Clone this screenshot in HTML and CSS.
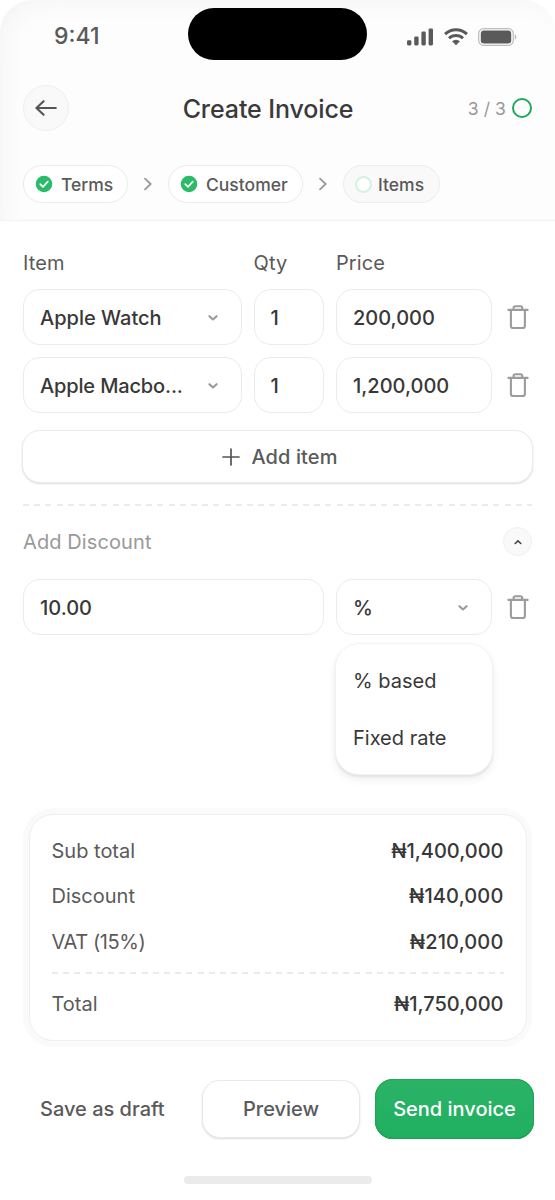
FILE: index.html
```html
<!DOCTYPE html>
<html lang="en">
<head>
<meta charset="utf-8">
<title>Create Invoice</title>
<link rel="stylesheet" href="styles.css">
</head>
<body>
<svg class="defs" width="0" height="0" aria-hidden="true">
  <symbol id="trash" viewBox="0 0 22 26"><path d="M1.4 5.9H20.6M6.6 5.4V4Q6.6 2.2 8.4 2.2H13.4Q15.2 2.2 15.2 4V5.4M3.9 6V21.7Q3.9 24 6.2 24H15.6Q17.9 24 17.9 21.7V6" fill="none" stroke="#9c9c9c" stroke-width="2.1" stroke-linecap="round"/></symbol>
  <symbol id="down" viewBox="0 0 12 8"><path d="M2.4 2.2L6 5.5L9.6 2.2" fill="none" stroke="#999" stroke-width="2.1" stroke-linecap="round" stroke-linejoin="round"/></symbol>
  <symbol id="next" viewBox="0 0 10 14"><path d="M2 1.7L7.7 7L2 12.3" fill="none" stroke="#999" stroke-width="1.8" stroke-linecap="round" stroke-linejoin="round"/></symbol>
  <symbol id="check" viewBox="0 0 18 18"><circle cx="9" cy="9" r="8.3" fill="#2abb68"/><path d="M5.2 9.2L8 11.8L12.8 6.6" fill="none" stroke="#fff" stroke-width="1.7" stroke-linecap="round" stroke-linejoin="round"/></symbol>
</svg>
<main class="screen">
  <header class="header">
    <div class="status">
      <span class="time">9:41</span>
      <div class="island"></div>
      <div class="signals">
        <svg width="27" height="19" viewBox="0 0 27 19" fill="#5a5a5a"><rect x="0" y="12.2" width="4.4" height="5.2" rx="1.3"/><rect x="7.2" y="8.6" width="4.4" height="8.8" rx="1.3"/><rect x="14.4" y="3.6" width="4.4" height="13.8" rx="1.3"/><rect x="21.6" y=".4" width="4.4" height="17" rx="1.3"/></svg>
        <svg width="24" height="18" viewBox="0 0 24 18"><g fill="none" stroke="#5a5a5a" stroke-width="3"><path d="M1.1 6.1A15.6 15.6 0 0 1 22.9 6.1"/><path d="M5 10.3A10 10 0 0 1 19 10.3"/></g><path d="M8 13.2Q12 10.2 16 13.2L12 17.2Z" fill="#5a5a5a"/></svg>
        <svg width="39" height="19" viewBox="0 0 39 19"><rect x=".7" y="0.6" width="34.6" height="16.8" rx="5" fill="none" stroke="#bbb" stroke-width="1.2"/><rect x="2.8" y="2.6" width="30.4" height="12.8" rx="3.2" fill="#5a5a5a"/><path d="M36.8 6.2Q38.4 7 38.4 9T36.8 11.8Z" fill="#bbb"/></svg>
      </div>
    </div>
    <div class="titlebar">
      <button class="back"><svg width="24" height="20" viewBox="0 0 24 20"><path d="M21.8 10H2.6M9.6 3.2L2.4 10L9.6 16.8" fill="none" stroke="#555" stroke-width="2.1" stroke-linecap="round" stroke-linejoin="round"/></svg></button>
      <h1 class="title">Create Invoice</h1>
      <div class="progress"><span>3 / 3</span><i class="ring"></i></div>
    </div>
    <nav class="steps">
      <div class="step"><svg width="18" height="18"><use href="#check"/></svg><span>Terms</span></div>
      <svg class="next" width="10" height="14"><use href="#next"/></svg>
      <div class="step step-customer"><svg width="18" height="18"><use href="#check"/></svg><span>Customer</span></div>
      <svg class="next" width="10" height="14"><use href="#next"/></svg>
      <div class="step step-current"><i class="dot"></i><span>Items</span></div>
    </nav>
  </header>

  <section class="items">
    <div class="row labels"><span>Item</span><span>Qty</span><span>Price</span></div>
    <div class="row">
      <div class="field"><span>Apple Watch</span><svg width="12" height="8"><use href="#down"/></svg></div>
      <div class="field">1</div>
      <div class="field"><span>200,000</span></div>
      <svg class="trash" width="22" height="26"><use href="#trash"/></svg>
    </div>
    <div class="row">
      <div class="field"><span class="long">Apple Macbo...</span><svg width="12" height="8"><use href="#down"/></svg></div>
      <div class="field">1</div>
      <div class="field"><span>1,200,000</span></div>
      <svg class="trash" width="22" height="26"><use href="#trash"/></svg>
    </div>
    <button class="add"><svg width="18" height="18" viewBox="0 0 18 18"><path d="M9 1V17M1 9H17" stroke="#555" stroke-width="1.7" stroke-linecap="round"/></svg><span>Add item</span></button>
  </section>
  <div class="dashed"></div>
  <section class="discount">
    <div class="discount-head"><span>Add Discount</span><button class="collapse"><svg width="8" height="6" viewBox="0 0 8 6"><path d="M1.2 4.5L4 1.8L6.8 4.5" fill="none" stroke="#444" stroke-width="1.6" stroke-linecap="round"/></svg></button></div>
    <div class="discount-row">
      <div class="field"><span>10.00</span></div>
      <div class="field select"><span>%</span><svg width="12" height="8"><use href="#down"/></svg>
        <div class="menu"><span>% based</span><span>Fixed rate</span></div>
      </div>
      <svg class="trash" width="22" height="26"><use href="#trash"/></svg>
    </div>
  </section>
  <section class="summary">
    <div class="card">
      <div class="line"><span>Sub total</span><b>₦1,400,000</b></div>
      <div class="line"><span>Discount</span><b class="wide">₦140,000</b></div>
      <div class="line"><span class="vat">VAT (15%)</span><b class="wide">₦210,000</b></div>
      <div class="dashed"></div>
      <div class="line total"><span>Total</span><b>₦1,750,000</b></div>
    </div>
  </section>
  <footer class="actions">
    <button class="draft">Save as draft</button>
    <button class="preview">Preview</button>
    <button class="send">Send invoice</button>
  </footer>
  <div class="home"></div>
</main>
</body>
</html>
```
FILE: styles.css
```css
* { box-sizing: border-box; }
body { margin: 0; background: #fff; font-family: Inter, "Liberation Sans", sans-serif; font-size: 20px; letter-spacing: 0.1px; color: #5a5a5a; }
button { font: inherit; letter-spacing: inherit; color: inherit; padding: 0; margin: 0; border: 0; background: none; }
svg { display: block; flex: none; }
.defs { position: absolute; }
.screen { width: 555px; height: 1200px; overflow: hidden; background: #fff; display: flex; flex-direction: column; }

.header { height: 221px; flex: none; border-bottom: 1.5px solid #f3f3f3; background: #fdfdfd; border-radius: 32px 32px 0 0; box-shadow: inset 12px 10px 26px -10px #f3f3f3; }
.status { height: 73px; padding: 8px 38px 0 54px; display: grid; grid-template-columns: 134px 179px 1fr; }
.time { font-size: 23px; font-weight: 500; line-height: 28px; padding-top: 14px; letter-spacing: 0; }
.island { height: 52px; border-radius: 26px; background: #000; }
.signals { display: flex; justify-content: flex-end; gap: 10px; padding-top: 20px; }
.titlebar { height: 70px; padding: 0 23px; display: grid; grid-template-columns: 76px 1fr 95px; align-items: center; }
.back { width: 46px; height: 46px; border-radius: 50%; border: 1px solid #efefef; background: #f9f9f9; display: grid; place-items: center; }
.title { margin: 0; text-align: center; font-size: 25px; font-weight: 500; color: #3a3a3a; letter-spacing: -0.1px; line-height: 30px; padding-top: 2px; }
.progress { display: flex; align-items: center; justify-content: flex-end; gap: 6px; color: #999; font-size: 17.5px; white-space: nowrap; }
.ring { width: 20px; height: 20px; border: 2.5px solid #20a75a; border-radius: 50%; }
.steps { display: flex; align-items: center; padding: 22px 23px 0; }
.step { width: 105px; height: 38px; border: 1px solid #e8ecea; border-radius: 19px; background: #fff; display: flex; align-items: center; gap: 8px; padding-left: 11px; font-size: 17.5px; font-weight: 500; letter-spacing: 0; }
.step-customer { width: 135px; }
.step-current { width: 97px; background: #f9f9f9; border-color: #ececec; gap: 6px; }
.dot { width: 17px; height: 17px; border: 2px solid #d3f1e2; border-radius: 50%; background: #fff; }
.next { margin: 0 15px; }

.items { padding: 26px 22px 0 23px; display: flex; flex-direction: column; }
.row { display: grid; grid-template-columns: 218.5px 70.5px 156px 28px; column-gap: 12px; align-items: center; margin-bottom: 12px; }
.labels { height: 32px; margin-bottom: 10px; }
.field { height: 56px; border: 1.5px solid #ebebeb; border-radius: 17px; background: #fff; color: #383838; font-weight: 500; letter-spacing: 0; display: flex; align-items: center; justify-content: space-between; padding: 1px 22px 0 16px; white-space: nowrap; }
.long { letter-spacing: -0.15px; }
.trash { justify-self: center; }
.add { height: 53px; margin: 5px 0 0 -1px; border-radius: 18px; border: 1px solid #ebebeb; box-shadow: 0 1px 2px #ddd; background: #fff; font-weight: 500; display: flex; align-items: center; justify-content: center; gap: 11px; padding-left: 5px; }
.dashed { height: 2px; flex: none; background: repeating-linear-gradient(90deg, #ebebeb 0 6px, transparent 6px 11.2px); }
.screen > .dashed { margin: 21px 23px 0; }
.discount { padding: 21px 22px 0 23px; }
.discount-head { height: 29px; display: flex; align-items: center; justify-content: space-between; color: #999; }
.collapse { width: 29px; height: 29px; margin-right: 1px; border: 1px solid #f0f0f0; border-radius: 50%; background: #f9f9f9; display: grid; place-items: center; }
.discount-row { margin-top: 23px; display: grid; grid-template-columns: 301px 156px 28px; column-gap: 12px; align-items: center; }
.select { position: relative; }
.menu { position: absolute; left: -2px; top: 63px; width: 158px; height: 132px; border: 1px solid #f3f3f3; border-radius: 24px; background: #fff; box-shadow: 0 2px 2px #e4e4e4, 0 5px 9px #f0f0f0; display: flex; flex-direction: column; padding: 9px 17px; font-weight: 400; letter-spacing: 0; }
.menu span { line-height: 57px; }
.summary { margin: 173px 23px 0; height: 239px; flex: none; padding: 6px 5.5px; border-radius: 30px; background: #fafafa; }
.card { height: 227px; border: 1px solid #efefef; border-radius: 24px; background: #fff; padding: 13px 22px 0; letter-spacing: 0; }
.line { height: 45.5px; display: flex; align-items: center; justify-content: space-between; }
.line b { font-weight: 500; color: #383838; }
.line .wide { letter-spacing: 0.15px; }
.vat { letter-spacing: -0.4px; }
.card .dashed { margin-top: 7px; }
.total { margin-top: 8px; }
.actions { margin: 32px 21px 0 23px; height: 60px; flex: none; display: grid; grid-template-columns: 163.5px 158.5px 159.5px; column-gap: 14.5px; align-items: center; font-weight: 500; letter-spacing: 0; }
.actions { grid-template-columns: 1fr 158px 159px; column-gap: 0; }
.draft { text-align: left; padding-left: 17px; }
.preview { height: 58px; border: 1px solid #e9e9e9; border-radius: 18px; box-shadow: 0 1px 2px #ddd; background: #fff; }
.send { height: 60px; border-radius: 18px; background: linear-gradient(#2bb367, #20af60); box-shadow: inset 0 0 1px 1px #22a458, inset 0 -1px 1px #1d9651; color: #fff; }
.actions { column-gap: 15px; }
.home { width: 188px; height: 8px; border-radius: 4px; background: #ebebeb; margin: 37px 0 0 183.5px; flex: none; }
```
